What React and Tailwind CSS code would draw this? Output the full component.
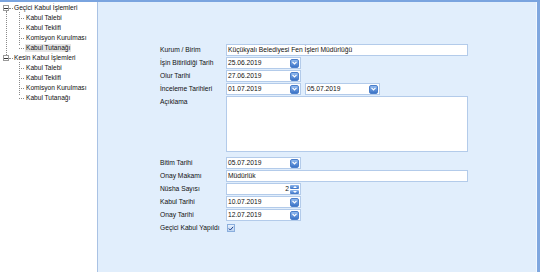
const treeGroups = [
    { title: 'Geçici Kabul İşlemleri', items: ['Kabul Talebi', 'Kabul Teklifi', 'Komisyon Kurulması', 'Kabul Tutanağı'], selected: 3 },
    { title: 'Kesin Kabul İşlemleri', items: ['Kabul Talebi', 'Kabul Teklifi', 'Komisyon Kurulması', 'Kabul Tutanağı'], selected: -1 },
];

function MinusBox() {
    return (
        <span className="absolute left-[3px] top-[2px] w-[6px] h-[6px] border border-[#9a9a9a] bg-white flex items-center justify-center">
            <span className="block w-[4px] h-px bg-[#333]" />
        </span>
    );
}

function Tree() {
    return (
        <div className="w-[98px] shrink-0 bg-white border-r border-[#a9c2e4] pt-[1px] text-[6.6px] text-[#111]">
            {treeGroups.map((g, gi) => (
                <div key={gi} className="relative">
                    {/* root-level connector */}
                    {gi === 0 && <span className="absolute left-[6px] top-[8px] w-0 h-[50px] border-l border-dotted border-[#8a8a8a]" />}
                    <div className="relative h-[10px] flex items-center pl-[14px]">
                        <MinusBox />
                        <span className="absolute left-[9px] top-[5px] w-[4px] border-t border-dotted border-[#8a8a8a]" />
                        {g.title}
                    </div>
                    <span className="absolute left-[19px] top-[9px] h-[33px] border-l border-dotted border-[#8a8a8a]" />
                    {g.items.map((it, i) => (
                        <div key={i} className="relative h-[10px] flex items-center pl-[25px]">
                            <span className="absolute left-[19px] top-[5px] w-[5px] border-t border-dotted border-[#8a8a8a]" />
                            <span className={i === g.selected ? 'bg-[#e4e4e4] px-[1px] leading-[8px]' : 'px-[1px]'}>{it}</span>
                        </div>
                    ))}
                </div>
            ))}
        </div>
    );
}

function DropButton() {
    return (
        <span className="w-[9px] h-[9px] rounded-[2px] bg-gradient-to-b from-[#8fb8ee] to-[#3b73c6] border border-[#4c7fca] flex items-center justify-center">
            <svg width="5" height="4" viewBox="0 0 5 4">
                <path d="M0.5 0.8 L2.5 2.8 L4.5 0.8" fill="none" stroke="#fff" strokeWidth="1.2" />
            </svg>
        </span>
    );
}

function SpinButton() {
    return (
        <span className="w-[9px] h-[9px] flex flex-col gap-px">
            <span className="h-[4px] rounded-[1px] bg-gradient-to-b from-[#8fb8ee] to-[#3b73c6] flex items-center justify-center">
                <svg width="4" height="2" viewBox="0 0 4 2"><path d="M0 2 L2 0 L4 2 Z" fill="#fff" /></svg>
            </span>
            <span className="h-[4px] rounded-[1px] bg-gradient-to-b from-[#8fb8ee] to-[#3b73c6] flex items-center justify-center">
                <svg width="4" height="2" viewBox="0 0 4 2"><path d="M0 0 L2 2 L4 0 Z" fill="#fff" /></svg>
            </span>
        </span>
    );
}

function DateBox({ value, className = '' }) {
    return (
        <div className={`w-[75px] h-[12px] bg-white border border-[#b3cbea] flex items-center justify-between pl-[1px] pr-px ${className}`}>
            <span>{value}</span>
            <DropButton />
        </div>
    );
}

function Row({ label, children }) {
    return (
        <div className="flex items-center h-[12px] mb-px">
            <span className="w-[66px] shrink-0">{label}</span>
            {children}
        </div>
    );
}

export default function App() {
    return (
        <div className="w-[540px] h-[272px] overflow-hidden bg-white flex flex-col" style={{ fontFamily: '"Liberation Sans", Arial, sans-serif' }}>
            <div className="h-[2px] shrink-0 bg-[#7aa4df]" />
            <div className="flex flex-1 min-h-0">
                <Tree />
                <div className="flex-1 bg-[#e1eefc] border-r-[3px] border-[#7fa7df] shadow-[inset_-1px_0_0_#f2f8ff] pl-[62px] pt-[42px] text-[6.7px] text-[#111]">
                    <Row label="Kurum / Birim">
                        <div className="w-[242px] h-[12px] bg-white border border-[#b3cbea] flex items-center pl-[1px]">Küçükyalı Belediyesi Fen İşleri Müdürlüğü</div>
                    </Row>
                    <Row label="İşin Bitirildiği Tarih"><DateBox value="25.06.2019" /></Row>
                    <Row label="Olur Tarihi"><DateBox value="27.06.2019" /></Row>
                    <Row label="İnceleme Tarihleri">
                        <DateBox value="01.07.2019" />
                        <DateBox value="05.07.2019" className="ml-[4px]" />
                    </Row>
                    <div className="flex mt-px mb-[5px]">
                        <span className="w-[66px] shrink-0 pt-px">Açıklama</span>
                        <div className="w-[242px] h-[56px] bg-white border border-[#b3cbea]" />
                    </div>
                    <Row label="Bitim Tarihi"><DateBox value="05.07.2019" /></Row>
                    <Row label="Onay Makamı">
                        <div className="w-[242px] h-[12px] bg-white border border-[#b3cbea] flex items-center pl-[1px]">Müdürlük</div>
                    </Row>
                    <Row label="Nüsha Sayısı">
                        <div className="w-[75px] h-[12px] bg-white border border-[#b3cbea] flex items-center justify-end gap-px pr-px">
                            <span>2</span>
                            <SpinButton />
                        </div>
                    </Row>
                    <Row label="Kabul Tarihi"><DateBox value="10.07.2019" /></Row>
                    <Row label="Onay Tarihi"><DateBox value="12.07.2019" /></Row>
                    <Row label="Geçici Kabul  Yapıldı">
                        <span className="w-[8px] h-[8px] ml-px border border-[#8aaedd] bg-gradient-to-b from-[#e8f1fc] to-[#bcd3f0] flex items-center justify-center">
                            <svg width="6" height="5" viewBox="0 0 6 5"><path d="M0.8 2.5 L2.3 4 L5.2 0.8" fill="none" stroke="#1d3f8a" strokeWidth="1" /></svg>
                        </span>
                    </Row>
                </div>
            </div>
        </div>
    );
}
